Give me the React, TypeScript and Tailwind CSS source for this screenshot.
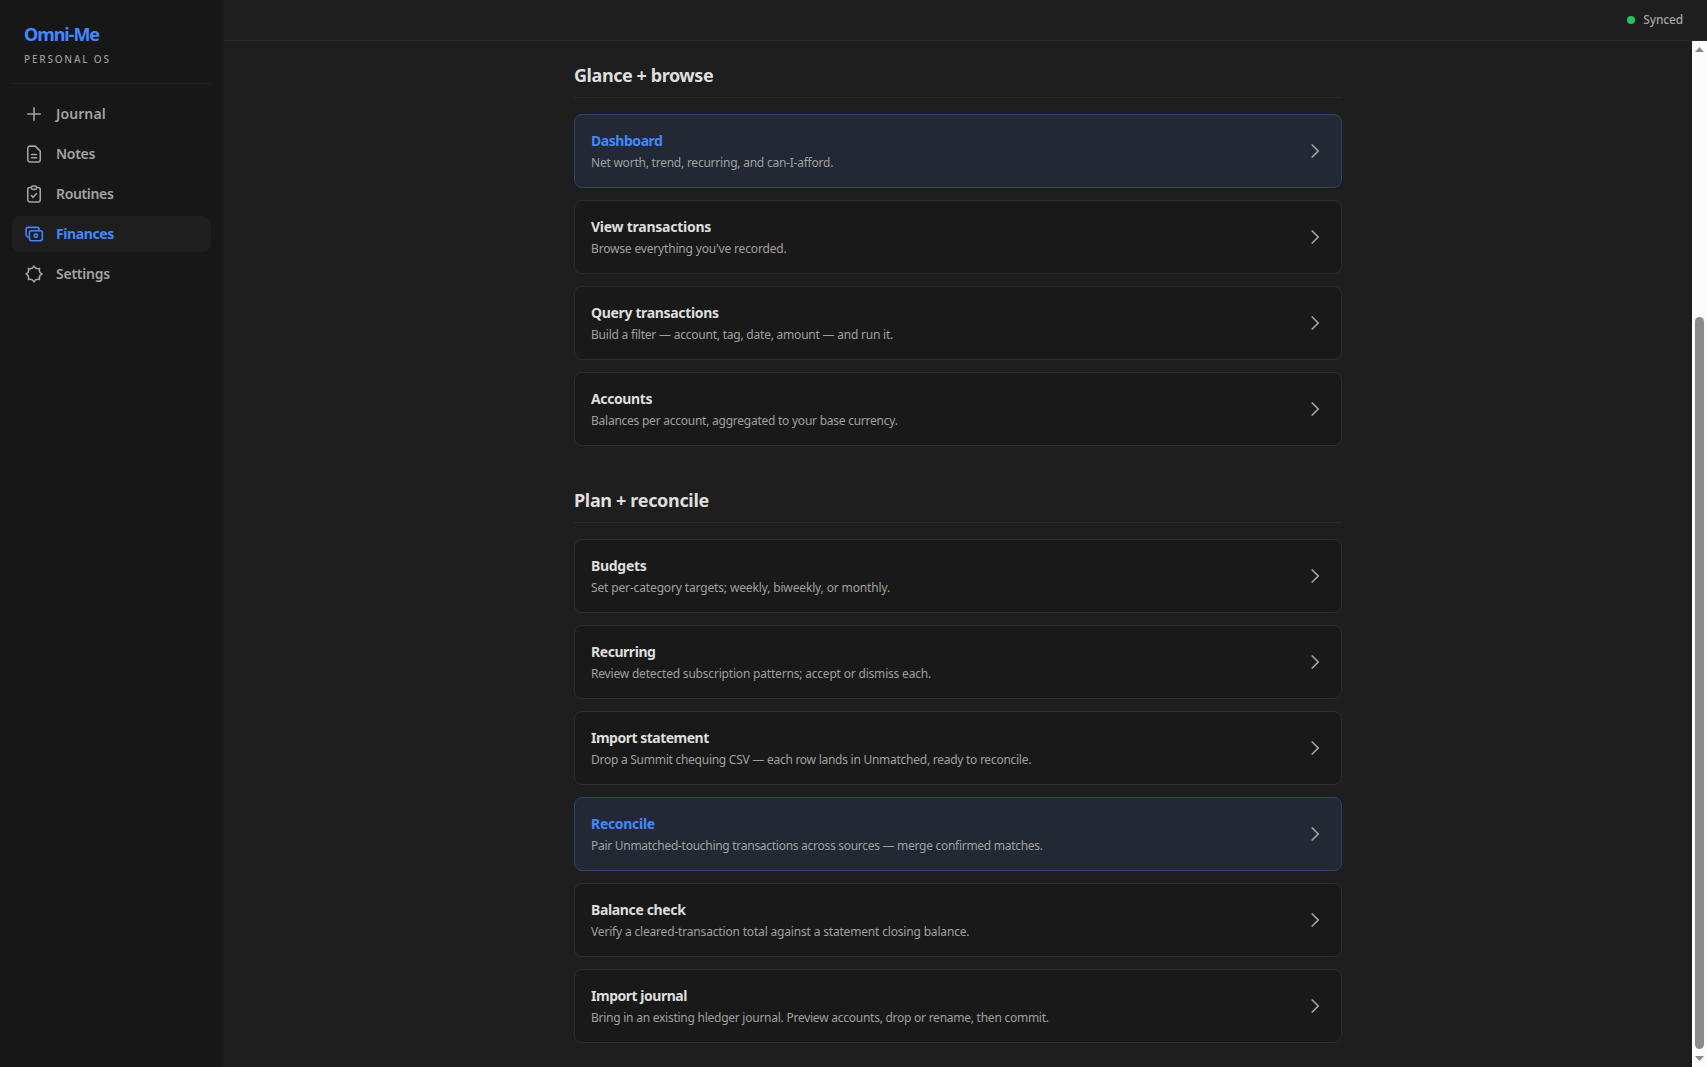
import React from "react";

type Entry = { title: string; text: string; tt: string; dt: string; active?: boolean };

const browse: Entry[] = [
  { title: "Dashboard", text: "Net worth, trend, recurring, and can-I-afford.", tt: "tracking-[-0.45px]", dt: "tracking-[-0.23px]", active: true },
  { title: "View transactions", text: "Browse everything you've recorded.", tt: "tracking-[-0.25px]", dt: "tracking-[-0.17px]" },
  { title: "Query transactions", text: "Build a filter — account, tag, date, amount — and run it.", tt: "tracking-[-0.34px]", dt: "tracking-[-0.22px]" },
  { title: "Accounts", text: "Balances per account, aggregated to your base currency.", tt: "tracking-[-0.38px]", dt: "tracking-[-0.245px]" },
];

const plan: Entry[] = [
  { title: "Budgets", text: "Set per-category targets; weekly, biweekly, or monthly.", tt: "tracking-[-0.3px]", dt: "tracking-[-0.145px]" },
  { title: "Recurring", text: "Review detected subscription patterns; accept or dismiss each.", tt: "tracking-[-0.45px]", dt: "tracking-[-0.19px]" },
  { title: "Import statement", text: "Drop a Summit chequing CSV — each row lands in Unmatched, ready to reconcile.", tt: "tracking-[-0.5px]", dt: "tracking-[-0.26px]" },
  { title: "Reconcile", text: "Pair Unmatched-touching transactions across sources — merge confirmed matches.", tt: "tracking-[-0.3px]", dt: "tracking-[-0.28px]", active: true },
  { title: "Balance check", text: "Verify a cleared-transaction total against a statement closing balance.", tt: "tracking-[-0.36px]", dt: "tracking-[-0.175px]" },
  { title: "Import journal", text: "Bring in an existing hledger journal. Preview accounts, drop or rename, then commit.", tt: "tracking-[-0.48px]", dt: "tracking-[-0.25px]" },
];

function Icon({ children }: { children: React.ReactNode }) {
  return (
    <svg className="size-5 shrink-0" viewBox="0 0 24 24" fill="none" stroke="currentColor" strokeWidth="1.9" strokeLinecap="round" strokeLinejoin="round">
      {children}
    </svg>
  );
}

const nav = [
  { label: "Journal", tracking: "tracking-[0.1px]", icon: <path d="M12 4.5v15m7.5-7.5h-15" /> },
  {
    label: "Notes",
    tracking: "tracking-[-0.3px]",
    icon: <path d="M13.5 2.5H7A2.5 2.5 0 0 0 4.5 5v14A2.5 2.5 0 0 0 7 21.5h10a2.5 2.5 0 0 0 2.5-2.5V8.5L13.5 2.5ZM9 12.5h6M9 16.5h6" />,
  },
  {
    label: "Routines",
    tracking: "tracking-[-0.35px]",
    icon: <path d="M8.5 4.2H7A2.5 2.5 0 0 0 4.5 6.7V19A2.5 2.5 0 0 0 7 21.5h10a2.5 2.5 0 0 0 2.5-2.5V6.7A2.5 2.5 0 0 0 17 4.2h-1.5M10.8 2.4h2.4a2 2 0 0 1 2 2q0 2-2 2h-2.4q-2 0-2-2a2 2 0 0 1 2-2ZM9 14l2 2 4-4.5" />,
  },
  {
    label: "Finances",
    tracking: "tracking-[-0.4px]",
    active: true,
    icon: (
      <>
        <path d="M5.5 15.5H5A2.5 2.5 0 0 1 2.5 13V6.5A2.5 2.5 0 0 1 5 4h10.5A2.5 2.5 0 0 1 18 6.5V8" />
        <rect x="6.5" y="8" width="15.5" height="12" rx="2.5" />
        <circle cx="14.3" cy="14" r="2" />
      </>
    ),
  },
  {
    label: "Settings",
    tracking: "tracking-[-0.25px]",
    icon: <path d="M12 2.5Q14.2 6.7 18.7 5.3Q17.3 9.8 21.5 12Q17.3 14.2 18.7 18.7Q14.2 17.3 12 21.5Q9.8 17.3 5.3 18.7Q6.7 14.2 2.5 12Q6.7 9.8 5.3 5.3Q9.8 6.7 12 2.5Z" />,
  },
];

function Card({ title, text, tt, dt, active }: Entry) {
  return (
    <a className={`flex h-[74px] items-center justify-between rounded-lg border pr-[15.5px] pl-4 ${active ? "border-[#2b4371] bg-[#222834]" : "border-[#2d2d2d] bg-[#191919]"}`}>
      <div className="flex flex-col pt-[2px] pl-[0.5px] whitespace-nowrap">
        <span className={`text-sm leading-5 font-bold ${tt} ${active ? "text-[#4287ff]" : "text-[#dedede]"}`}>{title}</span>
        <span className={`mt-0.5 text-xs leading-5 text-[#a0a0a0] ${dt}`}>{text}</span>
      </div>
      <svg className="size-5 text-[#a3a3a3]" viewBox="0 0 20 20" fill="none" stroke="currentColor" strokeWidth="1.7" strokeLinecap="round">
        <path d="M7.2 4l6 6-6 6" />
      </svg>
    </a>
  );
}

function Section({ heading, tracking, items }: { heading: string; tracking: string; items: Entry[] }) {
  return (
    <section>
      <h2 className={`mb-4 border-b border-[#292929] pb-2 pl-[0.5px] text-lg leading-7 font-bold text-[#dedede] ${tracking}`}>{heading}</h2>
      <div className="flex flex-col gap-3">
        {items.map((i) => (
          <Card key={i.title} {...i} />
        ))}
      </div>
    </section>
  );
}

export default function App() {
  return (
    <div className="flex h-screen overflow-hidden bg-[#1e1e1e] font-['Noto_Sans',sans-serif]">
      <aside className="w-[223px] shrink-0 bg-[#171717] px-3 pt-5">
        <div className="h-[64px] border-b border-[#222222] px-3">
          <div className="text-lg leading-7 font-bold text-[#4287ff]"><span className="tracking-[-1.05px]">Omni-Me</span></div>
          <div className="mt-[3px] text-[10px] leading-4 font-medium text-[#999999]"><span className="tracking-[1.8px]">PERSONAL OS</span></div>
        </div>
        <nav className="mt-3 flex flex-col gap-1">
          {nav.map((n) => (
            <a key={n.label} className={`flex h-9 items-center gap-3 rounded-lg px-3 text-sm ${n.active ? "bg-[#1e1e1e] font-bold text-[#4287ff]" : "font-semibold text-[#a3a3a3]"}`}>
              <Icon>{n.icon}</Icon>
              <span className={n.tracking}>{n.label}</span>
            </a>
          ))}
        </nav>
      </aside>
      <div className="flex flex-1 flex-col">
        <header className="flex h-[41px] shrink-0 items-center justify-end gap-2 border-b border-[#292929] pr-6 text-xs font-medium text-[#a3a3a3]">
          <span className="size-2 rounded-full bg-[#22c55e]" />
          <span className="tracking-[-0.16px]">Synced</span>
        </header>
        <div className="flex min-h-0 flex-1">
          <main className="flex flex-1 justify-center pt-5">
            <div className="flex w-3xl flex-col gap-10">
              <Section heading="Glance + browse" tracking="tracking-[-0.43px]" items={browse} />
              <Section heading="Plan + reconcile" tracking="tracking-[-0.33px]" items={plan} />
            </div>
          </main>
          <div className="flex w-[15px] flex-col items-center bg-[#fcfcfc] pt-[6px] pb-[6px]">
            <svg className="h-[5px] w-[9px] shrink-0" viewBox="0 0 9 5"><path d="M4.5 0L9 5H0Z" fill="#8b8b8b" /></svg>
            <div className="mt-[265px] w-[9px] flex-1 rounded-full bg-[#8b8b8b]" />
            <svg className="mt-[7px] h-[5px] w-[9px] shrink-0" viewBox="0 0 9 5"><path d="M0 0H9L4.5 5Z" fill="#8b8b8b" /></svg>
          </div>
        </div>
      </div>
    </div>
  );
}
